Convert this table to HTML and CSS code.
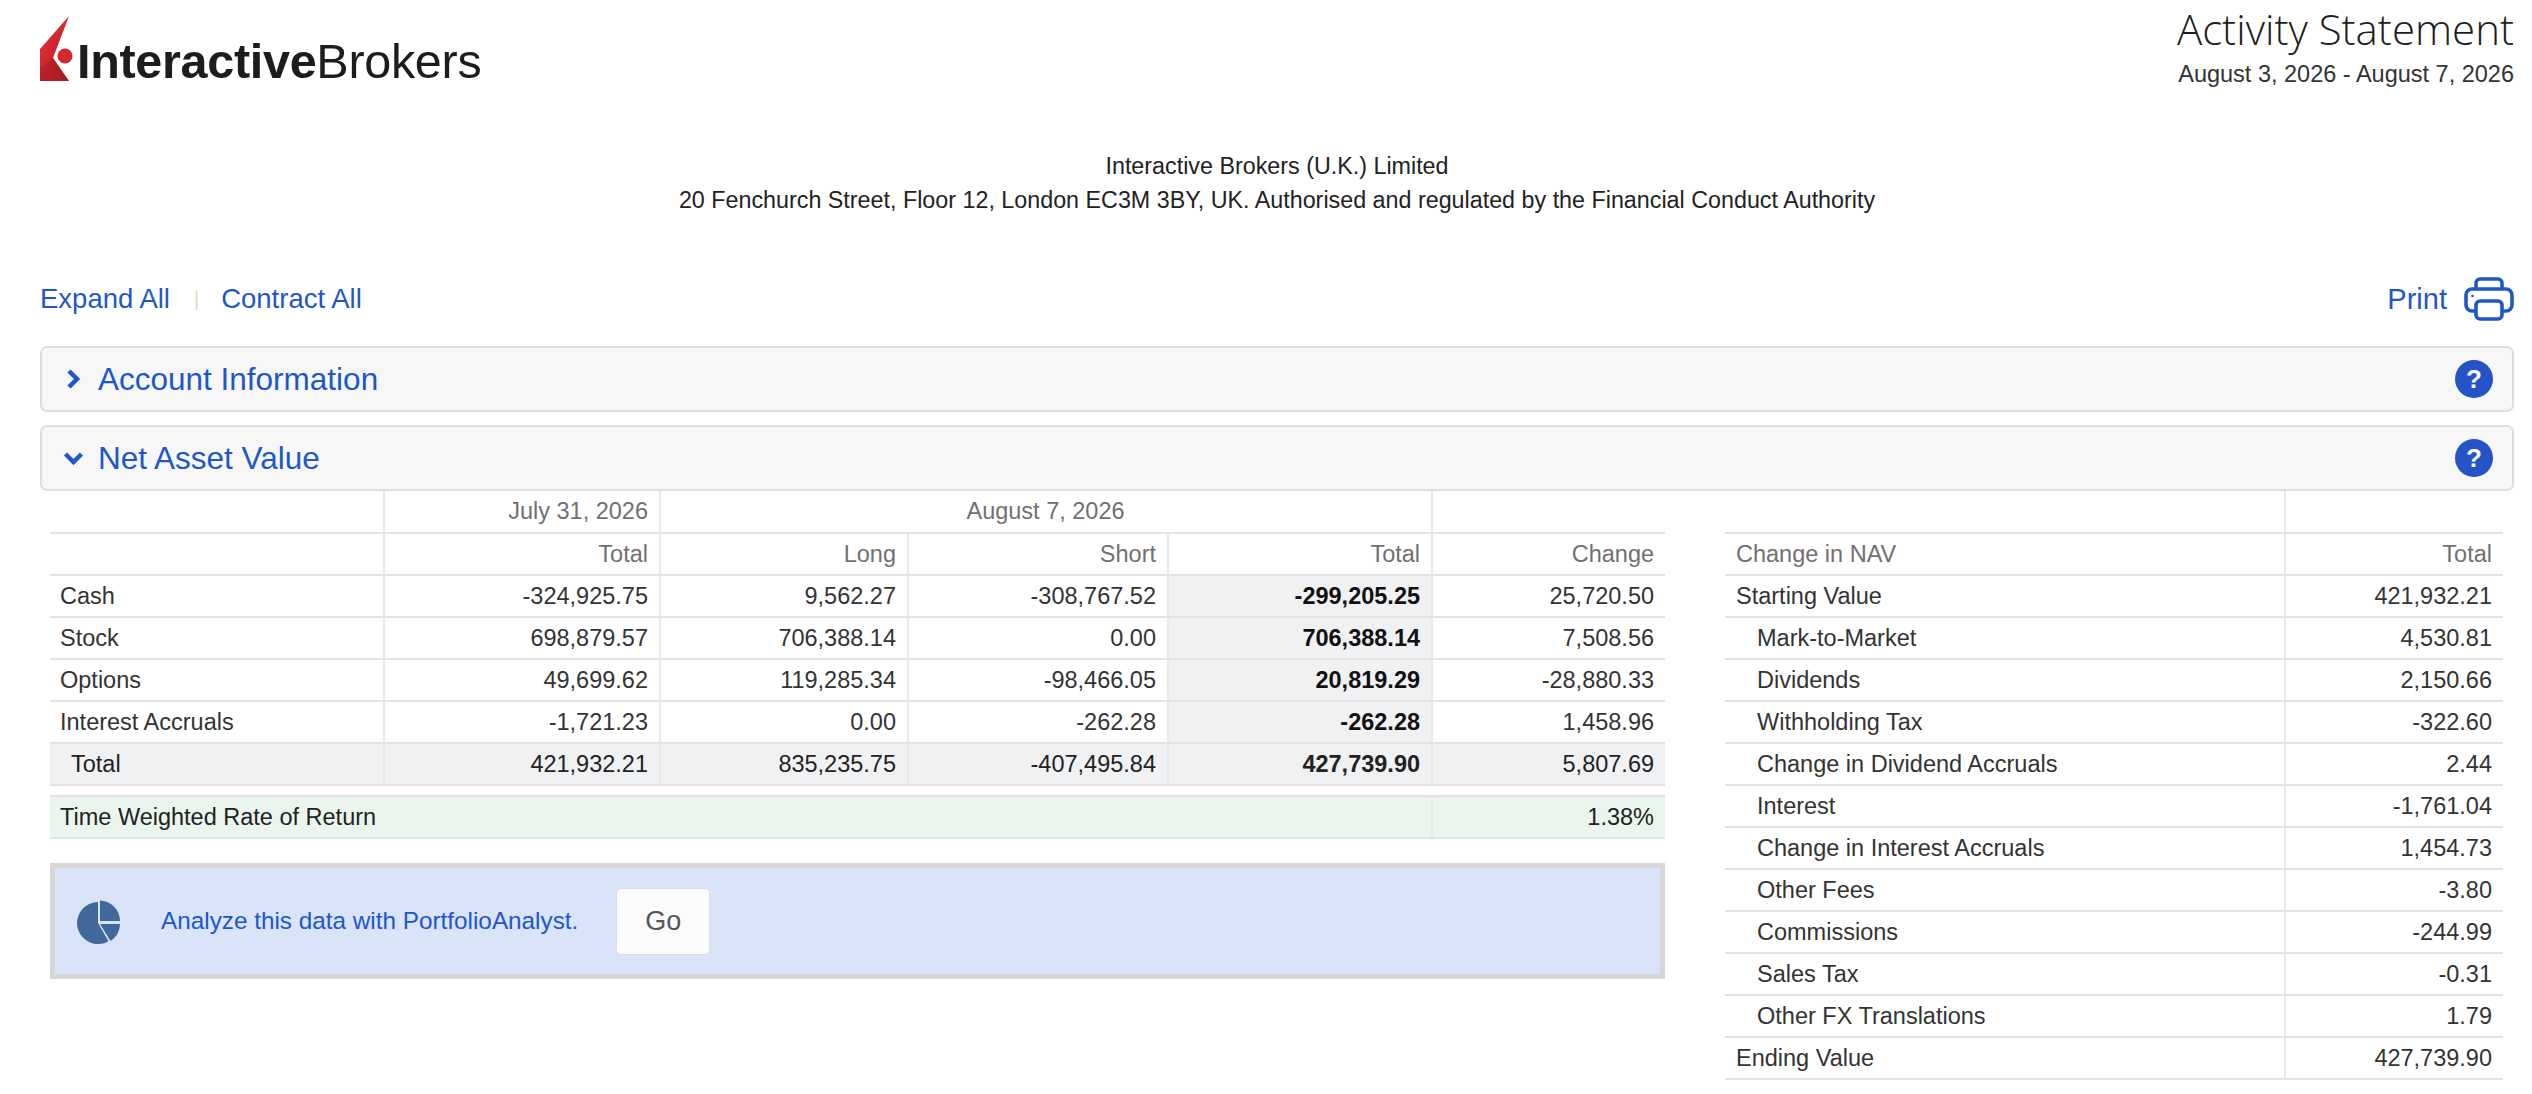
FILE: index.html
```html
<!DOCTYPE html>
<html lang="en">
<head>
<meta charset="utf-8">
<title>Activity Statement</title>
<link rel="stylesheet" href="styles.css">
</head>
<body>
<div class="page">
  <header class="top">
    <div class="logo">
      <svg viewBox="0 0 34 65" aria-hidden="true">
        <defs>
          <linearGradient id="lg" x1="0" y1="0" x2="1" y2="1">
            <stop offset="0" stop-color="#e0333a"/>
            <stop offset="0.55" stop-color="#cf262d"/>
            <stop offset="1" stop-color="#9d1a21"/>
          </linearGradient>
        </defs>
        <polygon points="29,0 0,33 0,65 29,65 13,42" fill="url(#lg)"/>
        <polygon points="0,52 13,42 29,65 0,65" fill="#a61c23" opacity="0.55"/>
        <circle cx="25" cy="40" r="7.5" fill="#d8282f"/>
      </svg>
      <div class="logo-text"><b>Interactive</b>Brokers</div>
    </div>
    <div class="title">
      <h1>Activity Statement</h1>
      <div class="period">August 3, 2026 - August 7, 2026</div>
    </div>
  </header>

  <div class="entity">
    <div>Interactive Brokers (U.K.) Limited</div>
    <div>20 Fenchurch Street, Floor 12, London EC3M 3BY, UK. Authorised and regulated by the Financial Conduct Authority</div>
  </div>

  <div class="toolbar">
    <div class="links">
      <a href="#">Expand All</a><span class="sep">|</span><a href="#">Contract All</a>
    </div>
    <a class="print" href="#">Print
      <svg viewBox="0 0 50 44" fill="none" stroke="#1f57c9" stroke-width="3.6" stroke-linejoin="round" aria-hidden="true">
        <path d="M12 12V6a4 4 0 0 1 4-4h18a4 4 0 0 1 4 4v6"/>
        <path d="M12 34H8a6 6 0 0 1-6-6V18a6 6 0 0 1 6-6h34a6 6 0 0 1 6 6v10a6 6 0 0 1-6 6h-4"/>
        <rect x="12" y="24" width="26" height="18" rx="4"/>
        <circle cx="8.5" cy="19" r="1.3" fill="#1f57c9" stroke="none"/>
      </svg>
    </a>
  </div>

  <section class="panel">
    <span class="chev"><svg width="15" height="22" viewBox="0 0 15 22"><path d="M3 3l8 8-8 8" fill="none" stroke="#1f57c9" stroke-width="4.5"/></svg></span>
    <span class="panel-title">Account Information</span>
    <span class="help">?</span>
  </section>
  <section class="panel panel-open">
    <span class="chev"><svg width="21" height="14" viewBox="0 0 21 14"><path d="M2.5 3l8 8 8-8" fill="none" stroke="#1f57c9" stroke-width="4.5"/></svg></span>
    <span class="panel-title">Net Asset Value</span>
    <span class="help">?</span>
  </section>

  <div class="nav-body">
    <div class="nav-left">
      <table class="grid nav-table">
        <colgroup>
          <col class="c1"><col class="c2"><col class="c3"><col class="c4"><col class="c5"><col class="c6">
        </colgroup>
        <thead>
          <tr>
            <th></th>
            <th>July 31, 2026</th>
            <th colspan="3" class="center">August 7, 2026</th>
            <th></th>
          </tr>
          <tr>
            <th></th>
            <th>Total</th>
            <th>Long</th>
            <th>Short</th>
            <th>Total</th>
            <th>Change</th>
          </tr>
        </thead>
        <tbody>
          <tr><td class="label">Cash</td><td>-324,925.75</td><td>9,562.27</td><td>-308,767.52</td><td class="hl">-299,205.25</td><td>25,720.50</td></tr>
          <tr><td class="label">Stock</td><td>698,879.57</td><td>706,388.14</td><td>0.00</td><td class="hl">706,388.14</td><td>7,508.56</td></tr>
          <tr><td class="label">Options</td><td>49,699.62</td><td>119,285.34</td><td>-98,466.05</td><td class="hl">20,819.29</td><td>-28,880.33</td></tr>
          <tr><td class="label">Interest Accruals</td><td>-1,721.23</td><td>0.00</td><td>-262.28</td><td class="hl">-262.28</td><td>1,458.96</td></tr>
          <tr class="total"><td class="label">Total</td><td>421,932.21</td><td>835,235.75</td><td>-407,495.84</td><td class="hl">427,739.90</td><td>5,807.69</td></tr>
        </tbody>
      </table>

      <table class="grid twrr">
        <colgroup><col class="t1"><col class="t2"></colgroup>
        <tr><td class="label">Time Weighted Rate of Return</td><td>1.38%</td></tr>
      </table>

      <div class="pa">
        <svg class="pie" viewBox="0 0 45 49" aria-hidden="true">
          <path d="M22 26 L32.5 44.2 A21 21 0 1 1 22 5 Z" fill="#41689a"/>
          <path d="M24 24 L24 3.5 A20.5 20.5 0 0 1 44 24 Z" fill="#41689a"/>
          <path d="M24 27 L44 27 A21 21 0 0 1 34.5 44 Z" fill="#41689a"/>
        </svg>
        <span class="pa-text">Analyze this data with PortfolioAnalyst.</span>
        <button class="go" type="button">Go</button>
      </div>
    </div>

    <table class="grid change-table">
      <colgroup><col class="r1"><col class="r2"></colgroup>
      <thead>
        <tr><th></th><th></th></tr>
        <tr><th class="label">Change in NAV</th><th>Total</th></tr>
      </thead>
      <tbody>
        <tr><td class="label">Starting Value</td><td>421,932.21</td></tr>
        <tr><td class="label sub">Mark-to-Market</td><td>4,530.81</td></tr>
        <tr><td class="label sub">Dividends</td><td>2,150.66</td></tr>
        <tr><td class="label sub">Withholding Tax</td><td>-322.60</td></tr>
        <tr><td class="label sub">Change in Dividend Accruals</td><td>2.44</td></tr>
        <tr><td class="label sub">Interest</td><td>-1,761.04</td></tr>
        <tr><td class="label sub">Change in Interest Accruals</td><td>1,454.73</td></tr>
        <tr><td class="label sub">Other Fees</td><td>-3.80</td></tr>
        <tr><td class="label sub">Commissions</td><td>-244.99</td></tr>
        <tr><td class="label sub">Sales Tax</td><td>-0.31</td></tr>
        <tr><td class="label sub">Other FX Translations</td><td>1.79</td></tr>
        <tr><td class="label">Ending Value</td><td>427,739.90</td></tr>
      </tbody>
    </table>
  </div>
</div>
</body>
</html>
```

FILE: styles.css
```css
* { box-sizing: border-box; }

body {
  margin: 0;
  background: #ffffff;
  color: #333333;
  font-family: "Liberation Sans", Arial, sans-serif;
}

.page {
  padding: 0 18px 0 40px;
}

/* header */
.top {
  display: flex;
  justify-content: space-between;
  align-items: flex-start;
  height: 89px;
}

.logo {
  display: flex;
  align-items: flex-start;
}

.logo svg {
  width: 34px;
  height: 65px;
  margin-top: 16px;
}

.logo-text {
  margin: 37px 0 0 3px;
  font-size: 48.5px;
  line-height: 48px;
  color: #1c1c1c;
  letter-spacing: -0.3px;
}

.logo-text b { font-weight: 700; }

.title { text-align: right; }

.title h1 {
  margin: 4px 0 0;
  font-family: "Open Sans", "Liberation Sans", sans-serif;
  font-weight: 300;
  font-size: 42px;
  line-height: 50px;
  color: #1e1e1e;
}

.period {
  margin-top: 5px;
  font-size: 23.5px;
  line-height: 30px;
  color: #333333;
}

/* entity */
.entity {
  margin-top: 60px;
  text-align: center;
  font-size: 23.3px;
  line-height: 34px;
  color: #222222;
}

/* toolbar */
.toolbar {
  margin-top: 59px;
  height: 46px;
  display: flex;
  justify-content: space-between;
  align-items: center;
}

.links {
  display: flex;
  align-items: center;
}

.links a,
.print {
  color: #1f57c9;
  font-size: 27.5px;
  text-decoration: none;
}

.sep {
  color: #e2d8bb;
  font-size: 20px;
  margin: 0 22px 0 24px;
}

.print {
  display: flex;
  align-items: center;
  gap: 17px;
  font-size: 29px;
}

.print svg {
  width: 50px;
  height: 44px;
}

/* panels */
.panel {
  margin-top: 24px;
  height: 66px;
  display: flex;
  align-items: center;
  padding: 0 19px 0 20px;
  background: #f7f7f7;
  border: 2px solid #dedede;
  border-radius: 7px;
}

.panel + .panel { margin-top: 13px; }

.chev {
  width: 22px;
  display: flex;
  justify-content: center;
  align-items: center;
}

.panel-title {
  flex: 1;
  margin-left: 14px;
  font-size: 31.5px;
  color: #1f57c9;
}

.help {
  width: 38px;
  height: 38px;
  border-radius: 50%;
  background: #2353c5;
  color: #ffffff;
  font-weight: 700;
  font-size: 26px;
  display: flex;
  align-items: center;
  justify-content: center;
}

/* NAV body */
.nav-body {
  display: flex;
  align-items: flex-start;
  gap: 60px;
  padding: 0 11px 0 10px;
}

.nav-left { width: 1615px; }

.grid {
  border-collapse: collapse;
  table-layout: fixed;
  font-size: 23.5px;
}

.grid th,
.grid td {
  height: 42px;
  padding: 0 11px 0 10px;
  text-align: right;
  font-weight: 400;
  white-space: nowrap;
  border-bottom: 2px solid #e2e2e2;
  border-left: 2px solid #e8e8e8;
}

.grid th:first-child,
.grid td:first-child { border-left: none; }

.grid th { color: #707070; }
.grid td { color: #333333; }

.grid .label { text-align: left; }
.grid .center { text-align: center; }

.nav-table { width: 1615px; }
.c1 { width: 334px; }
.c2 { width: 276px; }
.c3 { width: 248px; }
.c4 { width: 260px; }
.c5 { width: 264px; }
.c6 { width: 233px; }

.nav-table td.hl {
  background: #f0f1f3;
  font-weight: 700;
  color: #111111;
}

.nav-table tr.total td {
  background: #f0f1f3;
  color: #222222;
}

.nav-table tr.total td.label { padding-left: 21px; }

.twrr {
  width: 1615px;
  margin-top: 9px;
  border-top: 2px solid #e2e2e2;
}

.twrr td {
  background: #eaf6ed;
  color: #222222;
}

.t1 { width: 1382px; }
.t2 { width: 233px; }

/* PortfolioAnalyst box */
.pa {
  margin-top: 24px;
  height: 116px;
  display: flex;
  align-items: center;
  padding-left: 21px;
  background: #d9e4f8;
  border: 5px solid #d6d6d6;
}

.pie {
  width: 45px;
  height: 49px;
}

.pa-text {
  margin-left: 40px;
  font-size: 24.3px;
  color: #2156c8;
}

.go {
  margin-left: 38px;
  width: 94px;
  height: 67px;
  background: #fbfbfb;
  border: 1px solid #dddddd;
  border-radius: 5px;
  font-family: "Liberation Sans", Arial, sans-serif;
  font-size: 27px;
  color: #555555;
}

/* change in NAV */
.change-table { width: 778px; }
.r1 { width: 560px; }
.r2 { width: 218px; }

.change-table .label { padding-left: 11px; }
.change-table .label.sub { padding-left: 32px; }
```
